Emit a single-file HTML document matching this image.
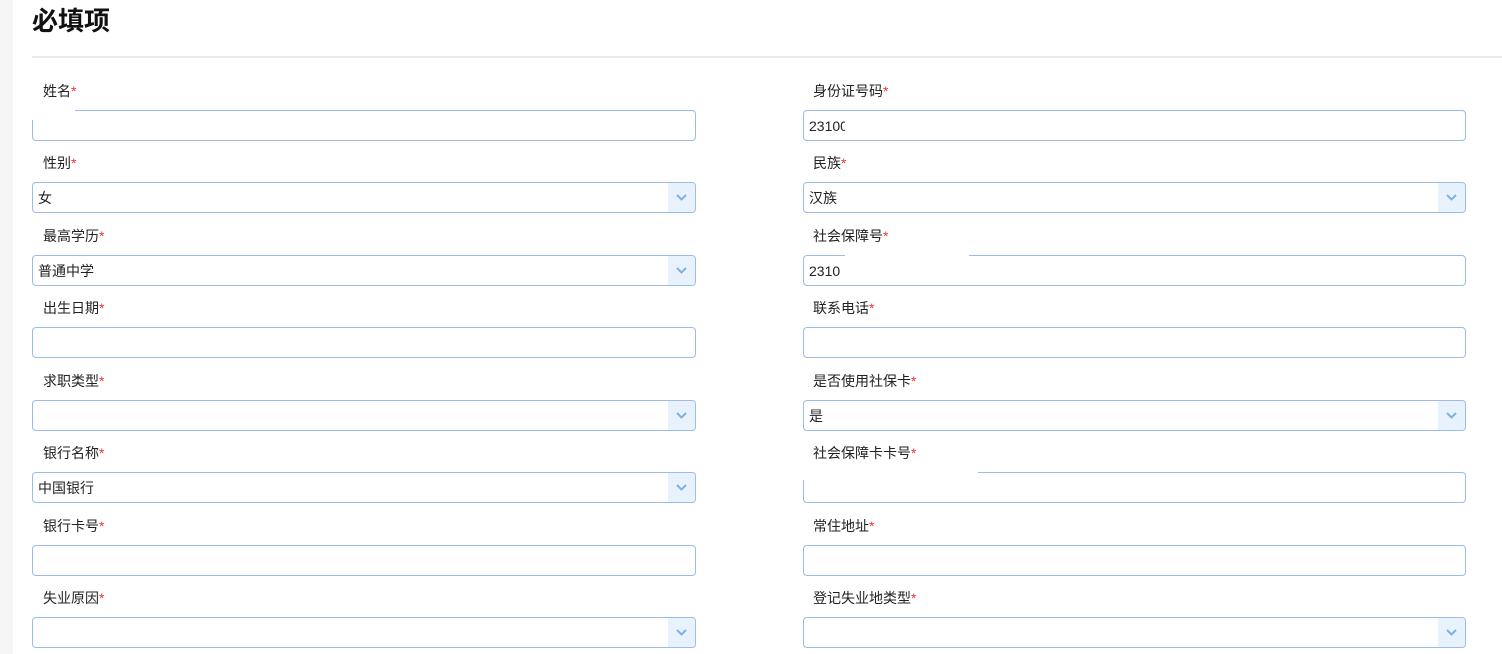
<!DOCTYPE html>
<html><head><meta charset="utf-8"><style>
body{margin:0;width:1502px;height:654px;position:relative;background:#fff;overflow:hidden;font-family:"Liberation Sans","Noto Sans CJK SC",sans-serif;font-size:14px;color:#222}
.strip{position:absolute;left:0;top:0;width:13px;height:654px;background:#f6f6f6}
h1{position:absolute;left:32px;top:4px;margin:0;font-size:26px;font-weight:bold;color:#111;line-height:34px}
.hr{position:absolute;left:32px;top:56px;width:1470px;height:2px;background:#ebe8e8}
.lbl{position:absolute;line-height:18px;margin-top:1px}
.lbl b{color:#e33;font-weight:normal}
.box{position:absolute;height:29px;border:1px solid #9bbbe8;border-radius:4px;box-sizing:content-box;line-height:31px;padding-left:5px;background:#fff}
.box.l{left:32px;width:657px}.box.r{left:803px;width:656px}
.arr{position:absolute;right:0;top:0;width:27px;height:29px;background:#e8f2fd;border-radius:0 3px 3px 0}
.arr svg{position:absolute;left:8px;top:11px}
.m{position:absolute;background:#fff}
</style></head><body>
<div class="strip"></div>
<h1>必填项</h1>
<div class="hr"></div>

<div class="lbl" style="left:43px;top:81px">姓名<b>*</b></div>
<div class="box l" style="top:110px"></div>
<div class="m" style="left:30px;top:108px;width:45px;height:12px"></div>
<div class="lbl" style="left:813px;top:81px">身份证号码<b>*</b></div>
<div class="box r" style="top:110px">2310<span style="display:inline-block;width:5px;overflow:hidden;vertical-align:top">0</span></div>

<div class="lbl" style="left:43px;top:153px">性别<b>*</b></div>
<div class="box l" style="top:182px">女<div class="arr"><svg width="11" height="7"><path d="M1 1L5.5 5.5L10 1" stroke="#7fb1e0" stroke-width="2" fill="none"/></svg></div></div>
<div class="lbl" style="left:813px;top:153px">民族<b>*</b></div>
<div class="box r" style="top:182px">汉族<div class="arr"><svg width="11" height="7"><path d="M1 1L5.5 5.5L10 1" stroke="#7fb1e0" stroke-width="2" fill="none"/></svg></div></div>

<div class="lbl" style="left:43px;top:226px">最高学历<b>*</b></div>
<div class="box l" style="top:255px">普通中学<div class="arr"><svg width="11" height="7"><path d="M1 1L5.5 5.5L10 1" stroke="#7fb1e0" stroke-width="2" fill="none"/></svg></div></div>
<div class="lbl" style="left:813px;top:226px">社会保障号<b>*</b></div>
<div class="box r" style="top:255px">2310</div>
<div class="m" style="left:845px;top:253px;width:124px;height:5px"></div>

<div class="lbl" style="left:43px;top:298px">出生日期<b>*</b></div>
<div class="box l" style="top:327px"></div>
<div class="lbl" style="left:813px;top:298px">联系电话<b>*</b></div>
<div class="box r" style="top:327px"></div>

<div class="lbl" style="left:43px;top:371px">求职类型<b>*</b></div>
<div class="box l" style="top:400px"><div class="arr"><svg width="11" height="7"><path d="M1 1L5.5 5.5L10 1" stroke="#7fb1e0" stroke-width="2" fill="none"/></svg></div></div>
<div class="lbl" style="left:813px;top:371px">是否使用社保卡<b>*</b></div>
<div class="box r" style="top:400px">是<div class="arr"><svg width="11" height="7"><path d="M1 1L5.5 5.5L10 1" stroke="#7fb1e0" stroke-width="2" fill="none"/></svg></div></div>

<div class="lbl" style="left:43px;top:443px">银行名称<b>*</b></div>
<div class="box l" style="top:472px">中国银行<div class="arr"><svg width="11" height="7"><path d="M1 1L5.5 5.5L10 1" stroke="#7fb1e0" stroke-width="2" fill="none"/></svg></div></div>
<div class="lbl" style="left:813px;top:443px">社会保障卡卡号<b>*</b></div>
<div class="box r" style="top:472px"></div>
<div class="m" style="left:800px;top:470px;width:178px;height:10px"></div>

<div class="lbl" style="left:43px;top:516px">银行卡号<b>*</b></div>
<div class="box l" style="top:545px"></div>
<div class="lbl" style="left:813px;top:516px">常住地址<b>*</b></div>
<div class="box r" style="top:545px"></div>

<div class="lbl" style="left:43px;top:588px">失业原因<b>*</b></div>
<div class="box l" style="top:617px"><div class="arr"><svg width="11" height="7"><path d="M1 1L5.5 5.5L10 1" stroke="#7fb1e0" stroke-width="2" fill="none"/></svg></div></div>
<div class="lbl" style="left:813px;top:588px">登记失业地类型<b>*</b></div>
<div class="box r" style="top:617px"><div class="arr"><svg width="11" height="7"><path d="M1 1L5.5 5.5L10 1" stroke="#7fb1e0" stroke-width="2" fill="none"/></svg></div></div>
</body></html>
